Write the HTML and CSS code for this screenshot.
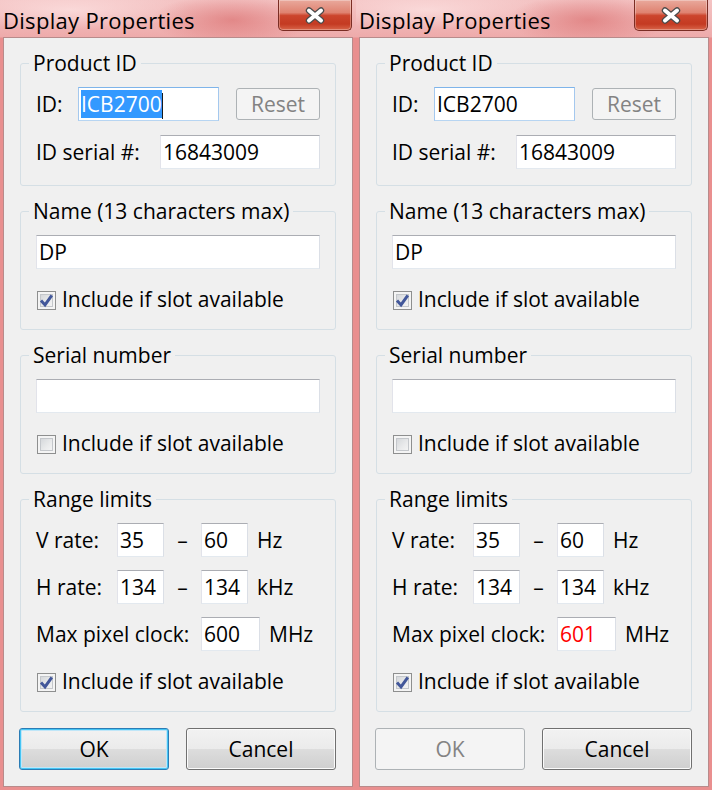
FILE: index.html
```html
<!DOCTYPE html>
<html lang="en">
<head>
  <meta charset="utf-8" />
  <title>Display Properties</title>
  <link rel="stylesheet" href="styles.css">
</head>
<body>
  <!-- left dialog: ID field focused, values valid -->
  <div class="window">
    <div class="titlebar">
      <span class="title">Display Properties</span>
      <button class="close-btn" aria-label="Close">
        <svg width="20" height="17" viewBox="0 0 20 17">
          <path d="M4 3.5 L16 13.5 M16 3.5 L4 13.5" stroke="#4b4b4b" stroke-width="6.4" stroke-linecap="round" fill="none"/>
          <path d="M4 3.5 L16 13.5 M16 3.5 L4 13.5" stroke="#fff" stroke-width="4" stroke-linecap="round" fill="none"/>
        </svg>
      </button>
    </div>
    <div class="client">
      <fieldset class="group">
        <legend>Product ID</legend>
        <div class="row">
          <span class="lbl lbl-id">ID:</span>
          <div class="edit edit-id"><span class="sel">ICB2700</span><span class="caret"></span></div>
          <button class="btn btn-reset" disabled>Reset</button>
        </div>
        <div class="row row-gap-id">
          <span class="lbl lbl-serial">ID serial #:</span>
          <div class="edit edit-fill">16843009</div>
        </div>
      </fieldset>
      <fieldset class="group">
        <legend>Name (13 characters max)</legend>
        <div class="row">
          <div class="edit edit-fill">DP</div>
        </div>
        <label class="check-row">
          <span class="checkbox checked"><svg width="17" height="17" viewBox="0 0 17 17"><path d="M3 8.6 L7 12.9 L13.8 3.4" stroke="#42579a" stroke-width="3" fill="none"/></svg></span>
          Include if slot available
        </label>
      </fieldset>
      <fieldset class="group">
        <legend>Serial number</legend>
        <div class="row">
          <div class="edit edit-fill"></div>
        </div>
        <label class="check-row">
          <span class="checkbox"></span>
          Include if slot available
        </label>
      </fieldset>
      <fieldset class="group group-last">
        <legend>Range limits</legend>
        <div class="row">
          <span class="lbl lbl-rate">V rate:</span>
          <div class="edit edit-small">35</div>
          <span class="dash">–</span>
          <div class="edit edit-small">60</div>
          <span class="unit">Hz</span>
        </div>
        <div class="row row-gap">
          <span class="lbl lbl-rate">H rate:</span>
          <div class="edit edit-small">134</div>
          <span class="dash">–</span>
          <div class="edit edit-small">134</div>
          <span class="unit">kHz</span>
        </div>
        <div class="row row-gap">
          <span class="lbl lbl-clock">Max pixel clock:</span>
          <div class="edit edit-clock">600</div>
          <span class="unit">MHz</span>
        </div>
        <label class="check-row">
          <span class="checkbox checked"><svg width="17" height="17" viewBox="0 0 17 17"><path d="M3 8.6 L7 12.9 L13.8 3.4" stroke="#42579a" stroke-width="3" fill="none"/></svg></span>
          Include if slot available
        </label>
      </fieldset>
      <div class="buttons">
        <button class="btn btn-default">OK</button>
        <button class="btn">Cancel</button>
      </div>
    </div>
  </div>

  <!-- right dialog: pixel clock out of range, OK disabled -->
  <div class="window">
    <div class="titlebar">
      <span class="title">Display Properties</span>
      <button class="close-btn" aria-label="Close">
        <svg width="20" height="17" viewBox="0 0 20 17">
          <path d="M4 3.5 L16 13.5 M16 3.5 L4 13.5" stroke="#4b4b4b" stroke-width="6.4" stroke-linecap="round" fill="none"/>
          <path d="M4 3.5 L16 13.5 M16 3.5 L4 13.5" stroke="#fff" stroke-width="4" stroke-linecap="round" fill="none"/>
        </svg>
      </button>
    </div>
    <div class="client">
      <fieldset class="group">
        <legend>Product ID</legend>
        <div class="row">
          <span class="lbl lbl-id">ID:</span>
          <div class="edit edit-id">ICB2700</div>
          <button class="btn btn-reset" disabled>Reset</button>
        </div>
        <div class="row row-gap-id">
          <span class="lbl lbl-serial">ID serial #:</span>
          <div class="edit edit-fill">16843009</div>
        </div>
      </fieldset>
      <fieldset class="group">
        <legend>Name (13 characters max)</legend>
        <div class="row">
          <div class="edit edit-fill">DP</div>
        </div>
        <label class="check-row">
          <span class="checkbox checked"><svg width="17" height="17" viewBox="0 0 17 17"><path d="M3 8.6 L7 12.9 L13.8 3.4" stroke="#42579a" stroke-width="3" fill="none"/></svg></span>
          Include if slot available
        </label>
      </fieldset>
      <fieldset class="group">
        <legend>Serial number</legend>
        <div class="row">
          <div class="edit edit-fill"></div>
        </div>
        <label class="check-row">
          <span class="checkbox"></span>
          Include if slot available
        </label>
      </fieldset>
      <fieldset class="group group-last">
        <legend>Range limits</legend>
        <div class="row">
          <span class="lbl lbl-rate">V rate:</span>
          <div class="edit edit-small">35</div>
          <span class="dash">–</span>
          <div class="edit edit-small">60</div>
          <span class="unit">Hz</span>
        </div>
        <div class="row row-gap">
          <span class="lbl lbl-rate">H rate:</span>
          <div class="edit edit-small">134</div>
          <span class="dash">–</span>
          <div class="edit edit-small">134</div>
          <span class="unit">kHz</span>
        </div>
        <div class="row row-gap">
          <span class="lbl lbl-clock">Max pixel clock:</span>
          <div class="edit edit-clock invalid">601</div>
          <span class="unit">MHz</span>
        </div>
        <label class="check-row">
          <span class="checkbox checked"><svg width="17" height="17" viewBox="0 0 17 17"><path d="M3 8.6 L7 12.9 L13.8 3.4" stroke="#42579a" stroke-width="3" fill="none"/></svg></span>
          Include if slot available
        </label>
      </fieldset>
      <div class="buttons">
        <button class="btn" disabled>OK</button>
        <button class="btn">Cancel</button>
      </div>
    </div>
  </div>
</body>
</html>
```

FILE: styles.css
```css
body{
  margin: 0;
  display: flex;
  background: #fff;
  color: #000;
  font-family: "Open Sans", "Noto Sans", sans-serif;
  font-size: 21px;
  line-height: 28px;
}
/* window frame (aero glass, pink tint) */
.window{
  width: 356px;
  height: 790px;
  box-sizing: border-box;
  display: flex;
  flex-direction: column;
  padding: 0 3px 3px 3px;
  background:
    radial-gradient(ellipse 80px 26px at 232px 20px, rgba(214, 98, 98, .55), rgba(214, 98, 98, 0)),
    radial-gradient(ellipse 120px 20px at 70px 10px, rgba(255, 235, 235, .6), rgba(255, 235, 235, 0)),
    linear-gradient(to bottom, #f4c4c4 0px, #eeabab 37px, #e98f8f 38px, #e98f8f 100%);
}
.titlebar{
  height: 37px;
  flex: none;
  display: flex;
  align-items: flex-start;
}
.title{
  padding-top: 5px;
  font-size: 22px;
  line-height: 30px;
  letter-spacing: 0.3px;
  color: #000;
}
.close-btn{
  width: 74px;
  height: 31px;
  margin: 0 1px 0 auto;
  padding: 0;
  display: flex;
  align-items: center;
  justify-content: center;
  border: 1px solid #7a2d24;
  border-top: none;
  border-radius: 0 0 5px 5px;
  background: linear-gradient(to bottom, #e9a99c 0%, #df8270 42%, #cc452d 52%, #c43a22 80%, #d8654a 100%);
  box-shadow: inset 0 0 0 1px rgba(255, 255, 255, .3);
}
.client{
  flex: 1;
  display: flex;
  flex-direction: column;
  padding-top: 11px;
  border: 1px solid #b88b8b;
  background: #f0f0f0;
}
.group{
  min-width: 0;
  margin: 0 16px 11px 16px;
  padding: 10px 15px 16px 15px;
  border: 1px solid #d5dfe5;
  border-radius: 3px;
}
.group-last{
  margin-bottom: 16px;
}
.group legend{
  margin-left: -7px;
  padding: 0 4px;
  line-height: 28px;
}
.row{
  height: 34px;
  display: flex;
  align-items: center;
}
.row-gap{
  margin-top: 13px;
}
.row-gap-id{
  margin-top: 14px;
}
.lbl{
  flex: none;
  white-space: nowrap;
}
.lbl-id{ width: 42px; }
.lbl-serial{ width: 124px; }
.lbl-rate{ width: 81px; }
.lbl-clock{ width: 165px; }

.edit{
  height: 34px;
  box-sizing: border-box;
  padding: 0 2px;
  border: 1px solid;
  border-color: #abadb3 #dbdfe6 #e3e9ef #e2e3ea;
  background: #fff;
  line-height: 32px;
  white-space: nowrap;
  overflow: hidden;
}
.edit-id{
  width: 141px;
  border-color: #7eb4ea #a4c8ee #b7d5f2 #a4c8ee;
}
.edit-fill{ flex: 1; }
.edit-small{ width: 47px; }
.edit-clock{ width: 59px; }
.edit.invalid{ color: #f00; }
.sel{
  background: #3399ff;
  color: #fff;
}
.caret{
  display: inline-block;
  width: 1px;
  height: 26px;
  vertical-align: middle;
  background: #1a1a1a;
}
.dash{
  width: 37px;
  text-align: center;
}
.unit{
  margin-left: 9px;
}
.check-row{
  height: 28px;
  margin-top: 16px;
  display: flex;
  align-items: center;
}
.checkbox{
  width: 19px;
  height: 19px;
  box-sizing: border-box;
  margin: 2px 6px 0 1px;
  display: flex;
  align-items: center;
  justify-content: center;
  border: 1px solid #8e8f8f;
  background: linear-gradient(135deg, #cdd0d4 0%, #e9eaeb 55%, #f9f9f9 100%);
  box-shadow: inset 0 0 0 2px #f4f4f4, inset 0 0 0 3px #c4c7cb;
}
.buttons{
  display: flex;
  gap: 17px;
  padding: 0 16px 0 15px;
}
.btn{
  width: 150px;
  height: 42px;
  box-sizing: border-box;
  padding: 0;
  border: 1px solid #707070;
  border-radius: 3px;
  background: linear-gradient(to bottom, #f2f2f2 0%, #ebebeb 50%, #dddddd 50%, #cfcfcf 100%);
  box-shadow: inset 0 0 0 1px #fbfbfb;
  color: #000;
  font: inherit;
}
.btn-default{
  border-color: #2b7cb5;
  box-shadow: inset 0 0 0 1px #46c5f4, inset 0 0 0 2px #bfe6f8;
}
.btn:disabled{
  border-color: #adb2b5;
  background: #f4f4f4;
  box-shadow: none;
  color: #838383;
}
.btn-reset{
  width: 84px;
  height: 32px;
  margin-left: auto;
}
```
